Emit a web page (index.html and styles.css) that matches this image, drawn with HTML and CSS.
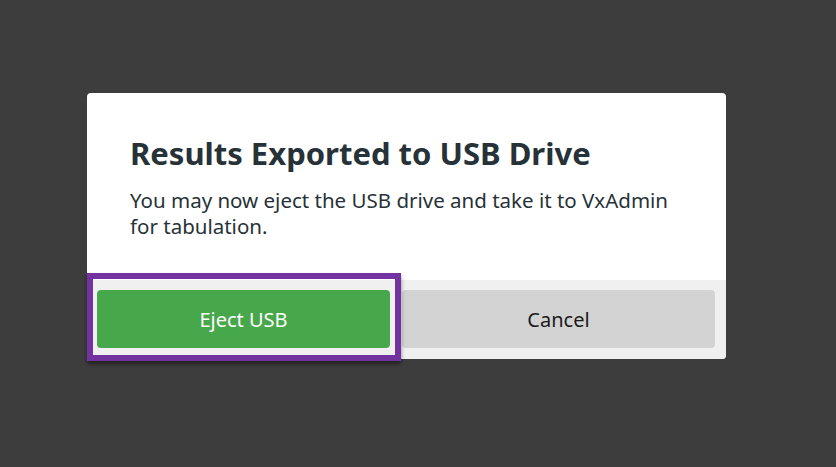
FILE: index.html
```html
<!DOCTYPE html>
<html lang="en">
<head>
<meta charset="utf-8">
<title>Results Exported</title>
<link rel="stylesheet" href="styles.css">
</head>
<body>
  <div class="modal" role="dialog">
    <div class="modal-content">
      <h1 class="modal-title">Results Exported to USB Drive</h1>
      <p class="modal-text">You may now eject the USB drive and take it to VxAdmin for tabulation.</p>
    </div>
    <div class="modal-actions">
      <button class="btn btn-primary is-focused" type="button">Eject USB</button>
      <button class="btn btn-secondary" type="button">Cancel</button>
    </div>
  </div>
</body>
</html>
```
FILE: styles.css
```css
html, body {
  margin: 0;
  height: 100%;
}
body {
  background: #3c3d3c;
  font-family: "Noto Sans", "Open Sans", sans-serif;
  padding: 93px 0 0 87px;
  box-sizing: border-box;
}
.modal {
  width: 639px;
  background: #ffffff;
  border-radius: 4px;
  overflow: visible;
}
.modal-content {
  height: 187px;
  box-sizing: border-box;
  padding: 38px 43px 0 43px;
  color: #263238;
}
.modal-title {
  margin: 0;
  font-size: 31px;
  line-height: 44px;
  font-weight: 700;
}
.modal-text {
  margin: 12px 0 0 0;
  font-size: 20.5px;
  line-height: 26px;
}
.modal-actions {
  display: flex;
  gap: 12px;
  padding: 10px 11px 11px 10px;
  background: #f0f0f0;
  border-radius: 0 0 4px 4px;
}
.btn {
  height: 58px;
  border: none;
  border-radius: 4px;
  font-family: inherit;
  font-size: 20px;
  cursor: pointer;
}
.btn-primary {
  flex: 0 0 293px;
  background: #47a74b;
  color: #ffffff;
}
.btn-secondary {
  flex: 1;
  background: #d3d3d3;
  color: #1a1a1a;
}
.is-focused {
  position: relative;
}
.is-focused::after {
  content: "";
  position: absolute;
  top: -17px;
  bottom: -13px;
  left: -10px;
  right: -11px;
  border: 6px solid #7232a0;
  box-shadow: 0 3px 4px rgba(0, 0, 0, 0.45);
  pointer-events: none;
}
```
